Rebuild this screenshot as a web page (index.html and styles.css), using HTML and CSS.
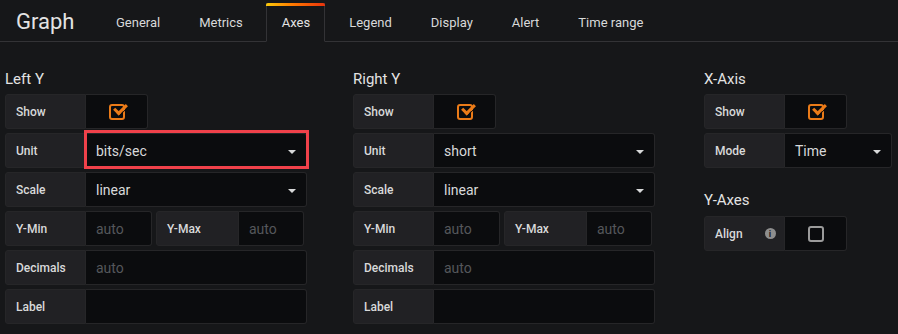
FILE: index.html
```html
<!DOCTYPE html>
<html>
<head>
<link rel="stylesheet" href="styles.css">
</head>
<body>
  <div class="editor-header">
    <div class="editor-title">Graph</div>
    <ul class="tabs">
      <li class="tab">General</li>
      <li class="tab">Metrics</li>
      <li class="tab active">Axes</li>
      <li class="tab">Legend</li>
      <li class="tab">Display</li>
      <li class="tab">Alert</li>
      <li class="tab">Time range</li>
    </ul>
  </div>

  <div class="editor-body">
    <!-- Left Y -->
    <div class="section">
      <h5 class="section-heading">Left Y</h5>
      <div class="form-row">
        <div class="form-label">Show</div>
        <div class="form-check"><span class="checkbox checked"></span></div>
      </div>
      <div class="form-row">
        <div class="form-label">Unit</div>
        <div class="form-select highlight">bits/sec<span class="caret"></span></div>
      </div>
      <div class="form-row">
        <div class="form-label">Scale</div>
        <div class="form-select">linear<span class="caret"></span></div>
      </div>
      <div class="form-row">
        <div class="form-label">Y-Min</div>
        <div class="form-input small placeholder">auto</div>
        <div class="form-label second">Y-Max</div>
        <div class="form-input small placeholder">auto</div>
      </div>
      <div class="form-row">
        <div class="form-label">Decimals</div>
        <div class="form-input wide placeholder">auto</div>
      </div>
      <div class="form-row">
        <div class="form-label">Label</div>
        <div class="form-input wide"></div>
      </div>
    </div>

    <!-- Right Y -->
    <div class="section">
      <h5 class="section-heading">Right Y</h5>
      <div class="form-row">
        <div class="form-label">Show</div>
        <div class="form-check"><span class="checkbox checked"></span></div>
      </div>
      <div class="form-row">
        <div class="form-label">Unit</div>
        <div class="form-select">short<span class="caret"></span></div>
      </div>
      <div class="form-row">
        <div class="form-label">Scale</div>
        <div class="form-select">linear<span class="caret"></span></div>
      </div>
      <div class="form-row">
        <div class="form-label">Y-Min</div>
        <div class="form-input small placeholder">auto</div>
        <div class="form-label second">Y-Max</div>
        <div class="form-input small placeholder">auto</div>
      </div>
      <div class="form-row">
        <div class="form-label">Decimals</div>
        <div class="form-input wide placeholder">auto</div>
      </div>
      <div class="form-row">
        <div class="form-label">Label</div>
        <div class="form-input wide"></div>
      </div>
    </div>

    <!-- X-Axis / Y-Axes -->
    <div class="section">
      <h5 class="section-heading">X-Axis</h5>
      <div class="form-row">
        <div class="form-label">Show</div>
        <div class="form-check"><span class="checkbox checked"></span></div>
      </div>
      <div class="form-row">
        <div class="form-label">Mode</div>
        <div class="form-select mode">Time<span class="caret"></span></div>
      </div>

      <h5 class="section-heading sub">Y-Axes</h5>
      <div class="form-row">
        <div class="form-label">Align <span class="info">i</span></div>
        <div class="form-check"><span class="checkbox"></span></div>
      </div>
    </div>
  </div>
</body>
</html>
```

FILE: styles.css
```css
* {
  box-sizing: border-box;
  margin: 0;
  padding: 0;
}
body {
  background-color: #161719;
  font-family: Roboto, "Liberation Sans", sans-serif;
  color: #d8d9da;
  width: 898px;
  height: 334px;
  overflow: hidden;
}

/* 標題列與分頁 */
.editor-header {
  display: flex;
  align-items: flex-end;
  height: 42px;
  border-bottom: 1px solid #333336;
}
.editor-title {
  font-size: 22px;
  color: #e3e3e3;
  padding-left: 16px;
  width: 100px;
  align-self: center;
  padding-top: 2px;
}
.tabs {
  display: flex;
  list-style: none;
  gap: 8px;
  margin-bottom: -1px;
}
.tab {
  position: relative;
  height: 39px;
  padding: 9px 14px 0 15px;
  font-size: 13px;
  color: #d8d9da;
  border: 1px solid transparent;
  border-top: 3px solid transparent;
}
.tab.active {
  color: #e3e3e3;
  background-color: #161719;
  border-color: #333336;
  border-bottom-color: #161719;
}
/* 分頁上方的漸層線 */
.tab.active::before {
  content: "";
  position: absolute;
  left: -1px;
  right: -1px;
  top: -3px;
  height: 3px;
  background: linear-gradient(to right, #fbca0a, #ff7a00 45%, #e8330c);
  border-radius: 2px 2px 0 0;
}

/* 內容 */
.editor-body {
  display: grid;
  grid-template-columns: 348px 351px auto;
  padding: 0 0 0 5px;
}
.section-heading {
  font-size: 15px;
  font-weight: normal;
  color: #e3e3e3;
  height: 52px;
  padding-top: 28px;
}
.section-heading.sub {
  height: 44px;
  padding-top: 19px;
}
.form-row {
  display: flex;
  height: 35px;
  margin-bottom: 4px;
}
.form-label {
  width: 81px;
  background-color: #212124;
  border: 1px solid #262628;
  border-radius: 3px 0 0 3px;
  font-size: 12px;
  font-weight: 500;
  padding: 0 0 0 10px;
  display: flex;
  align-items: center;
  color: #d8d9da;
}
.form-label.second {
  width: 83px;
  margin-left: 4px;
}
.form-check {
  width: 62px;
  background-color: #0b0c0e;
  border: 1px solid #262628;
  border-left: none;
  border-radius: 0 3px 3px 0;
  display: flex;
  align-items: center;
  justify-content: center;
}
.form-select,
.form-input {
  position: relative;
  background-color: #0b0c0e;
  border: 1px solid #262628;
  border-left: none;
  border-radius: 0 3px 3px 0;
  font-size: 14px;
  color: #d8d9da;
  display: flex;
  align-items: center;
  padding-left: 10px;
}
.form-select {
  width: 221px;
}
.form-select.mode {
  width: 107px;
}
.form-input.small {
  width: 66px;
}
.form-input.small:last-child {
  width: 65px;
}
.form-input.wide {
  width: 221px;
}
.placeholder {
  color: #55575b;
}
/* 紅框標註 */
.highlight::after {
  content: "";
  position: absolute;
  left: -2px;
  right: -3px;
  top: -4px;
  bottom: -2px;
  border: 3px solid #f0414a;
}
.caret {
  position: absolute;
  right: 10px;
  top: 16px;
  border-left: 4px solid transparent;
  border-right: 4px solid transparent;
  border-top: 4px solid #d8d9da;
}

/* 勾選框 */
.checkbox {
  display: inline-block;
  width: 16px;
  height: 16px;
  border: 2px solid #9b9b9b;
  border-radius: 3px;
  position: relative;
  margin-top: 1px;
}
.checkbox.checked {
  border-color: #eb7b18;
}
.checkbox.checked::after {
  content: "";
  position: absolute;
  left: 3px;
  top: -2px;
  width: 10px;
  height: 5px;
  border-left: 3px solid #eb7b18;
  border-bottom: 3px solid #eb7b18;
  transform: rotate(-45deg);
  box-shadow: -1px 1px 0 #0b0c0e;
}
.info {
  display: inline-flex;
  align-items: center;
  justify-content: center;
  width: 11px;
  height: 11px;
  border-radius: 50%;
  background-color: #8e8e8e;
  color: #212124;
  font-size: 9px;
  font-weight: bold;
  margin-left: 22px;
}
```
